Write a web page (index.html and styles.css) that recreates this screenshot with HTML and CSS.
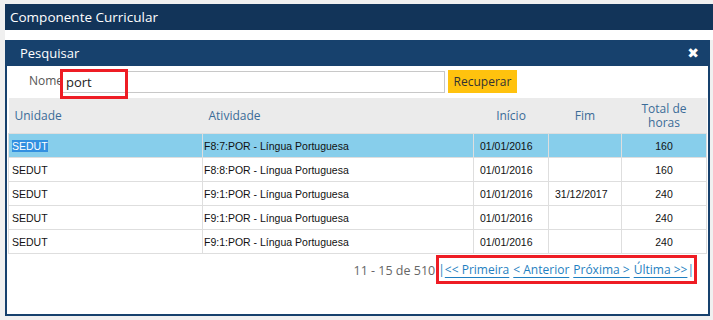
FILE: index.html
```html
<!DOCTYPE html>
<html>
<head>
    <title>Componente Curricular</title>
    <meta charset="utf-8">
    <link rel="stylesheet" href="styles.css">
</head>
<body>
    <div class="page">
        <div class="topbar">Componente Curricular</div>
        <div class="strip"></div>

        <!-- Dialog de pesquisa -->
        <div class="dialog">
            <div class="dialog-title">
                <span>Pesquisar</span>
                <span class="close">&#10006;</span>
            </div>

            <div class="search">
                <label for="nome">Nome:</label>
                <input type="text" id="nome" value="port">
                <button>Recuperar</button>
                <div class="mark mark-input"></div>
            </div>

            <table class="grid">
                <colgroup>
                    <col class="c1">
                    <col class="c2">
                    <col class="c3">
                    <col class="c4">
                    <col class="c5">
                </colgroup>
                <thead>
                    <tr>
                        <th class="left">Unidade</th>
                        <th class="left">Atividade</th>
                        <th>Início</th>
                        <th>Fim</th>
                        <th>Total de<br>horas</th>
                    </tr>
                </thead>
                <tbody>
                    <tr class="selected">
                        <td><span class="sel">SEDUT</span></td>
                        <td class="atv">F8:7:POR - Língua Portuguesa</td>
                        <td class="dt">01/01/2016</td>
                        <td class="dt"></td>
                        <td class="num">160</td>
                    </tr>
                    <tr>
                        <td>SEDUT</td>
                        <td class="atv">F8:8:POR - Língua Portuguesa</td>
                        <td class="dt">01/01/2016</td>
                        <td class="dt"></td>
                        <td class="num">160</td>
                    </tr>
                    <tr>
                        <td>SEDUT</td>
                        <td class="atv">F9:1:POR - Língua Portuguesa</td>
                        <td class="dt">01/01/2016</td>
                        <td class="dt">31/12/2017</td>
                        <td class="num">240</td>
                    </tr>
                    <tr>
                        <td>SEDUT</td>
                        <td class="atv">F9:1:POR - Língua Portuguesa</td>
                        <td class="dt">01/01/2016</td>
                        <td class="dt"></td>
                        <td class="num">240</td>
                    </tr>
                    <tr>
                        <td>SEDUT</td>
                        <td class="atv">F9:1:POR - Língua Portuguesa</td>
                        <td class="dt">01/01/2016</td>
                        <td class="dt"></td>
                        <td class="num">240</td>
                    </tr>
                </tbody>
            </table>

            <div class="pager">
                <span class="count">11 - 15 de 510</span>
                <div class="links">
                    <span class="bar">|</span><a href="#">&lt;&lt; Primeira</a>
                    <a href="#">&lt; Anterior</a>
                    <a href="#">Próxima &gt;</a>
                    <a href="#">Última &gt;&gt;</a><span class="bar end">|</span>
                    <div class="mark mark-pager"></div>
                </div>
            </div>
        </div>
    </div>
</body>
</html>
```

FILE: styles.css
```css
body {
    margin: 0;
    background-color: #f0f0f0;
    font-family: "Open Sans", "Noto Sans", sans-serif;
    overflow: hidden;
}

.page {
    padding: 4px 0 0 5px;
}

.topbar {
    height: 26px;
    line-height: 26px;
    background-color: #123459;
    color: #fff;
    font-size: 13.5px;
    padding-left: 5px;
}

.strip {
    height: 10px;
    background-color: #fff;
}

/* Dialog */
.dialog {
    width: 701px;
    height: 274px;
    border: 2px solid #17416d;
    border-top: none;
    background-color: #fff;
}

.dialog-title {
    height: 26px;
    margin: 0 -2px;
    background-color: #17416d;
    color: #fff;
    font-size: 13px;
    display: flex;
    align-items: center;
    justify-content: space-between;
    padding: 0 11px 0 15px;
}

.close {
    font-size: 14px;
    font-weight: bold;
    font-family: "DejaVu Sans", sans-serif;
}

.search {
    position: relative;
    height: 32px;
    display: flex;
    align-items: center;
    padding-left: 22px;
}

.search label {
    font-size: 12px;
    color: #555;
    width: 32px;
    margin-top: -4px;
}

.search input {
    width: 374px;
    height: 20px;
    padding: 0 4px;
    border: 1px solid #c8c8c8;
    font-size: 13px;
    font-family: "Open Sans", sans-serif;
    color: #222;
    margin: 0;
}

.search button {
    margin-left: 3px;
    height: 23px;
    width: 69px;
    padding: 0;
    border: none;
    background-color: #ffc20e;
    color: #333;
    font-size: 12px;
    font-family: "Open Sans", sans-serif;
    margin-top: -2px;
}

/* Red annotation boxes */
.mark {
    position: absolute;
    border: 3px solid #ee1c24;
}

.mark-input {
    left: 53px;
    top: 3px;
    width: 62px;
    height: 24px;
}

/* Table */
.grid {
    margin-left: 1px;
    width: 698px;
    border-collapse: collapse;
    table-layout: fixed;
}

.grid col.c1 { width: 194px; }
.grid col.c2 { width: 271px; }
.grid col.c3 { width: 75px; }
.grid col.c4 { width: 73px; }
.grid col.c5 { width: 85px; }

.grid th {
    height: 35px;
    padding: 0;
    background-color: #ebebeb;
    color: #3b6c98;
    font-weight: normal;
    font-size: 12px;
    line-height: 14px;
    text-align: center;
}

.grid th.left {
    text-align: left;
    padding-left: 6px;
}

.grid td {
    height: 23px;
    padding: 0 0 0 3px;
    border: 1px solid #dedede;
    font-family: "Liberation Sans", Arial, sans-serif;
    font-size: 10.5px;
    color: #111;
    white-space: nowrap;
}

.grid td.atv { padding-left: 1px; }
.grid td.dt { padding-left: 6px; }
.grid td.num { text-align: center; padding: 0; }

.grid tr.selected td {
    background-color: #87ceeb;
}

.sel {
    background-color: #3390e0;
    color: #fff;
}

/* Pager */
.pager {
    display: flex;
    justify-content: flex-end;
    align-items: center;
    height: 32px;
    padding-right: 14px;
    font-size: 12px;
}

.count {
    color: #666;
    margin-right: 3px;
    font-size: 12.5px;
}

.links {
    position: relative;
    display: flex;
    align-items: center;
    gap: 4px;
    line-height: 18px;
}

.links a {
    color: #1f7fc1;
    text-decoration: underline;
    text-underline-offset: 3px;
}

.bar {
    color: #1f7fc1;
    margin-right: -4px;
}

.bar.end {
    margin-left: -4px;
    margin-right: 0;
}

.mark-pager {
    left: -2px;
    right: -3px;
    top: -6px;
    height: 23px;
}
```
